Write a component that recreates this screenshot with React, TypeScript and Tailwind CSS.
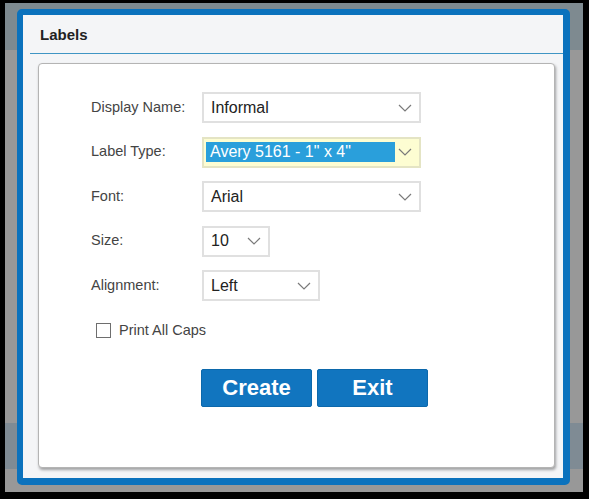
import React from "react";

const Chevron = () => (
  <svg width="14" height="8" viewBox="0 0 14 8" className="shrink-0">
    <path d="M1 1 L7 7 L13 1" fill="none" stroke="#7a7a7a" strokeWidth="1.2" />
  </svg>
);

const Select = ({
  value,
  width,
  highlight,
}: {
  value: string;
  width: string;
  highlight?: boolean;
}) => (
  <div
    className={`flex h-[31px] items-center justify-between border-2 pr-[7px] text-[16px] ${width} ${
      highlight
        ? "border-[#e4e4c4] bg-[#fdfdd2] pl-[2px]"
        : "border-[#e0e0e0] bg-white pl-[7px]"
    }`}
  >
    {highlight ? (
      <span className="flex h-[20px] w-[189px] items-center bg-[#2a9fdb] pl-[4px] text-white">
        {value}
      </span>
    ) : (
      <span className="text-[#222]">{value}</span>
    )}
    <Chevron />
  </div>
);

const Row = ({ label, children }: { label: string; children: React.ReactNode }) => (
  <div className="flex h-[31px] items-center">
    <div className="w-[111px] text-[14.5px] text-[#444]">{label}</div>
    {children}
  </div>
);

export default function App() {
  return (
    <div
      className="h-[499px] w-[589px] bg-black pb-[7px] pl-[5px] pr-[6px] pt-[3px]"
      style={{ fontFamily: '"Liberation Sans", Arial, sans-serif' }}
    >
      <div className="h-full w-full bg-[linear-gradient(to_bottom,#7e8a90_0px,#7e8a90_47px,#989898_47px,#989898_420px,#7f8b94_420px,#7f8b94_466px,#989898_466px)] pl-[12px] pt-[6px]">
        <div className="flex h-[476px] w-[553px] flex-col rounded-[5px] border-b-[7px] border-l-[6px] border-r-[7px] border-t-[6px] border-[#0b72bd] bg-[#f4f5f7]">
          <div className="flex h-[38px] items-center pl-[17px] pt-[2px] text-[15px] font-bold text-[#222]">
            Labels
          </div>
          <div className="ml-[7px] h-px bg-[#3f95c4]" />
          <div className="mb-[10px] ml-[15px] mr-[8px] mt-[9px] flex flex-1 flex-col rounded-[4px] border border-[#b4b4b4] bg-white pl-[52px] pt-[28px] shadow-[1px_2px_3px_rgba(0,0,0,0.35)]">
            <div className="flex flex-col gap-[13.5px]">
              <Row label="Display Name:">
                <Select value="Informal" width="w-[219px]" />
              </Row>
              <Row label="Label Type:">
                <Select value={'Avery 5161 - 1" x 4"'} width="w-[219px]" highlight />
              </Row>
              <Row label="Font:">
                <Select value="Arial" width="w-[219px]" />
              </Row>
              <Row label="Size:">
                <Select value="10" width="w-[68px]" />
              </Row>
              <Row label="Alignment:">
                <Select value="Left" width="w-[118px]" />
              </Row>
            </div>
            <label className="ml-[5px] mt-[19px] flex items-center gap-[8px] text-[14.5px] text-[#444]">
              <span className="h-[15px] w-[15px] border border-[#6e6e6e] bg-white" />
              Print All Caps
            </label>
            <div className="ml-[110px] mt-[27px] flex gap-[5px]">
              <button className="h-[38px] w-[111px] rounded-[2px] border border-[#0c68ab] bg-[#1175bf] text-[22px] font-bold text-white">
                Create
              </button>
              <button className="h-[38px] w-[111px] rounded-[2px] border border-[#0c68ab] bg-[#1175bf] text-[22px] font-bold text-white">
                Exit
              </button>
            </div>
          </div>
        </div>
      </div>
    </div>
  );
}
